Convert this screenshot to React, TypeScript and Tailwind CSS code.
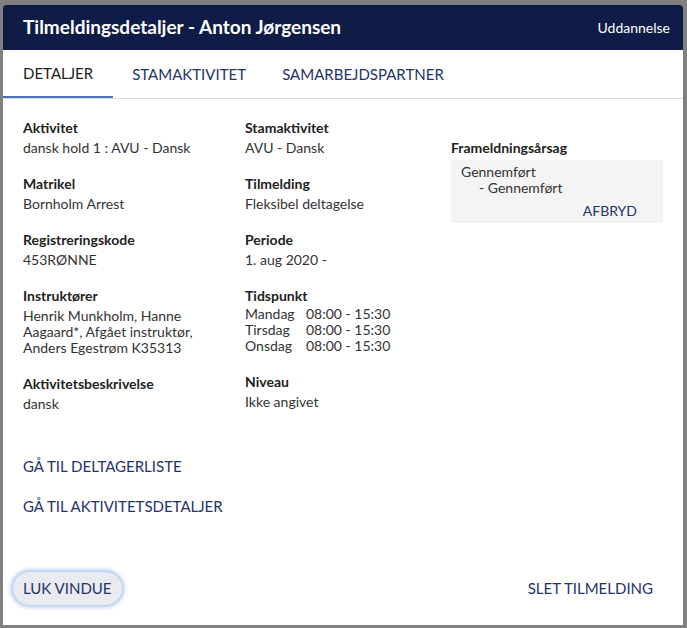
import React from 'react';

const font = { fontFamily: 'Lato, "Open Sans", sans-serif' };

function Field({ label, children }: { label: string; children: React.ReactNode }) {
    return (
        <div className="flex flex-col">
            <div className="text-[14px] leading-5 font-bold text-[#222]">{label}</div>
            <div className="text-[14px] leading-4 mt-[2px] text-[#333]">{children}</div>
        </div>
    );
}

export default function App() {
    const times = [
        ['Mandag', '08:00 - 15:30'],
        ['Tirsdag', '08:00 - 15:30'],
        ['Onsdag', '08:00 - 15:30'],
    ];

    return (
        <div className="w-[687px] h-[628px] bg-[#808080] pl-[3px] pr-[4px] pt-[5px] pb-[3px]" style={font}>
            <div className="flex flex-col h-full bg-white rounded-t-[3px] overflow-hidden">
                <div className="flex items-center justify-between h-[45px] bg-[#0f1c47] pl-5 pr-[13px] text-white">
                    <div className="text-[19px] font-bold">Tilmeldingsdetaljer - Anton Jørgensen</div>
                    <div className="text-[14px]">Uddannelse</div>
                </div>

                <div className="flex h-[49px] border-b border-[#ddd] text-[15px]">
                    <div className="flex items-center px-5 border-b-2 border-[#4a73b3] text-[#222]">DETALJER</div>
                    <div className="flex items-center w-[150px] pl-[19px] text-[#23336b]">STAMAKTIVITET</div>
                    <div className="flex items-center pl-[19px] text-[#23336b]">SAMARBEJDSPARTNER</div>
                </div>

                <div className="flex pl-5 pt-[19px]">
                    <div className="w-[222px] flex flex-col gap-[18px]">
                        <Field label="Aktivitet">dansk hold 1 : AVU - Dansk</Field>
                        <Field label="Matrikel">Bornholm Arrest</Field>
                        <Field label="Registreringskode">453RØNNE</Field>
                        <Field label="Instruktører">
                            Henrik Munkholm, Hanne<br />Aagaard*, Afgået instruktør,<br />Anders Egestrøm K35313
                        </Field>
                        <Field label="Aktivitetsbeskrivelse">dansk</Field>
                    </div>
                    <div className="w-[206px] flex flex-col gap-[18px]">
                        <Field label="Stamaktivitet">AVU - Dansk</Field>
                        <Field label="Tilmelding">Fleksibel deltagelse</Field>
                        <Field label="Periode">1. aug 2020 -</Field>
                        <div className="flex flex-col">
                            <div className="text-[14px] leading-5 font-bold text-[#222]">Tidspunkt</div>
                            {times.map(([d, t]) => (
                                <div key={d} className="flex text-[14px] leading-4 text-[#333]">
                                    <div className="w-[61px]">{d}</div>
                                    <div>{t}</div>
                                </div>
                            ))}
                        </div>
                        <Field label="Niveau">Ikke angivet</Field>
                    </div>
                    <div className="w-[212px] pt-5">
                        <div className="text-[14px] leading-5 font-bold text-[#222]">Frameldningsårsag</div>
                        <div className="bg-[#f4f4f4] h-[63px] mt-[2px] pt-[4px] px-[10px] text-[14px] leading-4 text-[#333]">
                            <div>Gennemført</div>
                            <div className="pl-[18px]">- Gennemført</div>
                            <div className="flex justify-end pr-[16px] mt-[7px] text-[#23336b]">AFBRYD</div>
                        </div>
                    </div>
                </div>

                <div className="flex flex-col gap-[20px] pl-5 mt-[44px] text-[15px] leading-5 text-[#23336b]">
                    <div>GÅ TIL DELTAGERLISTE</div>
                    <div>GÅ TIL AKTIVITETSDETALJER</div>
                </div>

                <div className="flex items-center justify-between mt-auto mb-[20px] pl-[10px] pr-[30px]">
                    <button className="h-[33px] px-[10px] rounded-full bg-[#e9ebf0] text-[15px] text-[#23336b] shadow-[0_0_4px_2px_rgba(110,150,230,0.6)]">
                        LUK VINDUE
                    </button>
                    <div className="text-[15px] text-[#23336b]">SLET TILMELDING</div>
                </div>
            </div>
        </div>
    );
}
